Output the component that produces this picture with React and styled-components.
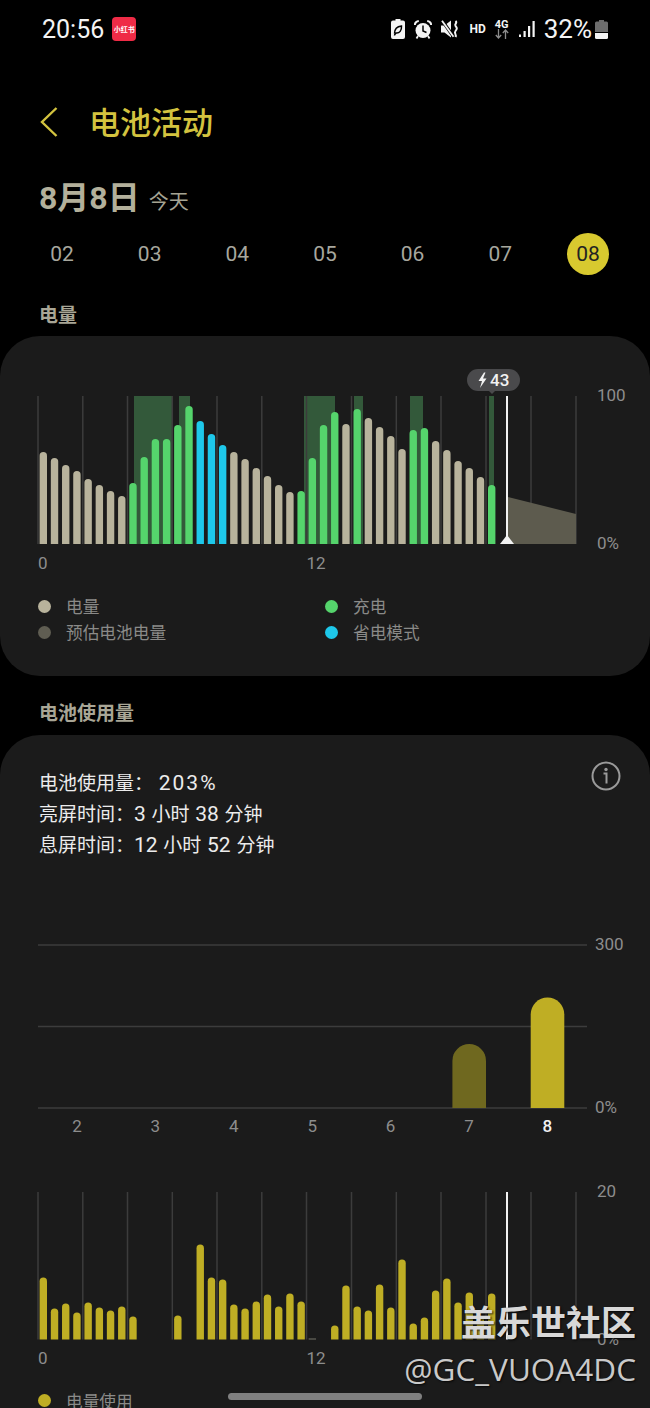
import React from "react";
import styled, { createGlobalStyle } from "styled-components";

const GlobalStyle = createGlobalStyle`
  html, body {
    margin: 0;
    padding: 0;
    background: #000;
  }
  * {
    box-sizing: border-box;
  }
`;

const sans = `Roboto, "Noto Sans CJK SC", sans-serif`;

const days = ["02", "03", "04", "05", "06", "07", "08"];
const weekDays = [2, 3, 4, 5, 6, 7, 8];

// t = tan, g = green, b = blue
const levelBars = [
  [92, "t"], [86, "t"], [79, "t"], [73, "t"], [65, "t"], [59, "t"], [53, "t"], [48, "t"],
  [61, "g"], [87, "g"], [105, "g"], [105, "g"], [119, "g"], [138, "g"],
  [123, "b"], [110, "b"], [99, "b"],
  [92, "t"], [85, "t"], [76, "t"], [68, "t"], [59, "t"], [52, "t"],
  [53, "g"], [86, "g"], [119, "g"], [132, "g"],
  [120, "t"], [135, "g"], [126, "t"], [117, "t"], [108, "t"], [95, "t"],
  [114, "g"], [116, "g"],
  [103, "t"], [94, "t"], [83, "t"], [76, "t"], [67, "t"], [59, "g"],
];

const usageBars = [
  62, 31, 36, 27, 37, 32, 29, 33, 23, 0, 0, 0, 24, 0, 95, 62, 60, 35, 31, 38, 45, 33, 46, 38, 1,
  0, 14, 54, 33, 29, 55, 32, 80, 16, 22, 49, 61, 37, 47, 22, 46,
];

const chargeBands = [
  [134, 173], [179, 190], [304, 335], [354, 363], [410, 423], [489, 494],
];

const barColors = { t: "#b8b39c", g: "#55d46c", b: "#1ec8ea", y: "#bfae24" };
const gridXs = [38, 82.8, 127.5, 172.3, 217, 261.8, 306.5, 351.5, 396.3, 441, 486, 531, 576];

const barX = (i) => 43.3 + i * 11.21;

const topRoundedBar = (cx, base, h, w) => {
  const r = w / 2;
  const l = cx - r;
  return `M${l} ${base} V${base - h + r} A${r} ${r} 0 0 1 ${l + w} ${base - h + r} V${base} Z`;
};

const Screen = styled.div`
  position: relative;
  width: 650px;
  height: 1408px;
  overflow: hidden;
  background: #000;
  font-family: ${sans};
`;

const StatusBar = styled.div`
  display: flex;
  align-items: center;
  height: 58px;
  padding: 0 42px;
  color: #f4f4f4;
`;

const Clock = styled.span`
  font-size: 25px;
`;

const AppBadge = styled.span`
  display: flex;
  align-items: center;
  justify-content: center;
  width: 24px;
  height: 24px;
  margin-left: 8px;
  border-radius: 4px;
  background: #ef2b46;
  color: #fff;
  font-size: 7px;
  font-weight: 700;
  white-space: nowrap;
`;

const StatusIcons = styled.div`
  display: flex;
  align-items: center;
  margin-left: auto;
`;

const IconSlot = styled.svg`
  display: block;
  margin-left: ${(p) => p.$gap || 0}px;
`;

const Net = styled.span`
  margin-left: ${(p) => p.$gap}px;
  font-size: ${(p) => p.$size}px;
  font-weight: ${(p) => p.$weight || 400};
`;

const NetStack = styled.div`
  display: flex;
  flex-direction: column;
  align-items: center;
  width: 14px;
  margin-left: 9px;
`;

const NetLabel = styled.span`
  font-size: 11px;
  font-weight: 700;
  line-height: 9px;
`;

const NetArrows = styled.svg`
  display: block;
`;

const TitleBar = styled.div`
  display: flex;
  align-items: center;
  gap: 31px;
  height: 64px;
  margin-top: 32px;
  padding-left: 40px;
`;

const Title = styled.h1`
  margin: 0 0 4px;
  color: #d3c33f;
  font-size: 31px;
  font-weight: 500;
`;

const DateTitle = styled.div`
  display: flex;
  align-items: baseline;
  height: 44px;
  margin-top: 22px;
  padding-left: 39px;
  line-height: 44px;
`;

const DateBig = styled.span`
  color: #b3b09b;
  font-size: 32px;
  font-weight: 700;
`;

const DateSub = styled.span`
  margin-left: 9px;
  color: #a5a393;
  font-size: 20px;
`;

const DayRow = styled.div`
  display: flex;
  justify-content: space-between;
  margin-top: 13px;
  padding: 0 41px;
`;

const Day = styled.div`
  display: flex;
  align-items: center;
  justify-content: center;
  width: 42px;
  height: 42px;
  border-radius: 50%;
  background: ${(p) => (p.$active ? "#d8c92f" : "transparent")};
  color: ${(p) => (p.$active ? "#222" : "#a7a79e")};
  font-size: 21px;
`;

const SectionLabel = styled.div`
  height: 26px;
  margin-top: ${(p) => p.$top}px;
  padding-left: 39px;
  color: #a9a696;
  font-size: 19px;
  font-weight: 700;
  line-height: 26px;
`;

const Card = styled.section`
  height: ${(p) => p.$height}px;
  margin-top: ${(p) => p.$top}px;
  padding-top: ${(p) => p.$pad}px;
  border-radius: ${(p) => (p.$open ? "40px 40px 0 0" : "40px")};
  background: #1b1b1b;
`;

const ChartSvg = styled.svg`
  display: block;
  margin-top: ${(p) => p.$top || 0}px;
`;

const AxisLabel = styled.text`
  fill: ${(p) => p.$fill || "#8d8d8d"};
  font-family: ${sans};
  font-size: 17px;
  font-weight: ${(p) => p.$weight || 400};
`;

const Legend = styled.div`
  display: grid;
  grid-template-columns: 287px 1fr;
  margin-top: ${(p) => p.$top}px;
  padding-left: 38px;
`;

const LegendItem = styled.div`
  display: flex;
  align-items: center;
  gap: 15px;
  height: 26px;
  color: #8a8a88;
  font-size: 16.7px;
`;

const Dot = styled.span`
  width: 13px;
  height: 13px;
  border-radius: 50%;
  background: ${(p) => p.$color};
`;

const SummaryRow = styled.div`
  display: flex;
  justify-content: space-between;
  align-items: flex-start;
  padding: 0 29px 0 39px;
`;

const SummaryText = styled.div`
  margin-top: 7px;
  color: #ececec;
  font-size: 19px;
  line-height: 31px;
  word-spacing: 1px;
`;

const Num = styled.span`
  font-size: 21px;
  letter-spacing: ${(p) => (p.$wide ? 2 : 0)}px;
`;

const HomeBar = styled.div`
  position: absolute;
  left: 228px;
  bottom: 8px;
  width: 194px;
  height: 7px;
  border-radius: 4px;
  background: #808080;
`;

const Watermark = styled.div`
  position: absolute;
  right: 14px;
  bottom: 19px;
  display: flex;
  flex-direction: column;
  align-items: flex-end;
  color: #d8d8d8;
  text-shadow: 1px 1px 2px rgba(0, 0, 0, 0.8);
  white-space: nowrap;
`;

const WatermarkBrand = styled.div`
  font-family: "Noto Sans CJK SC", sans-serif;
  font-size: 35px;
  font-weight: 700;
  line-height: 44px;
`;

const WatermarkUser = styled.div`
  margin-top: 6px;
  color: #c9c9c9;
  font-family: "Open Sans", sans-serif;
  font-size: 31.5px;
  line-height: 40px;
`;

const LeafBattery = () => (
  <IconSlot width="14" height="20" viewBox="0 0 14 20">
    <path d="M4.5 0h5v1.5H12a2 2 0 0 1 2 2V18a2 2 0 0 1-2 2H2a2 2 0 0 1-2-2V3.5a2 2 0 0 1 2-2h2.5z" fill="#f4f4f4" />
    <path d="M3.5 14.5c0-4.5 3-7 7-7.5 .3 4.5-2 7.5-5.5 7-1 1-1.5 1.5-1.5 2.5" fill="none" stroke="#000" strokeWidth="1.5" />
  </IconSlot>
);

const AlarmIcon = () => (
  <IconSlot $gap={9} width="18" height="19" viewBox="0 0 18 19">
    <circle cx="9" cy="10.5" r="7.5" fill="#f4f4f4" />
    <path d="M9 5.5v5.5l3.5 1.5" fill="none" stroke="#000" strokeWidth="1.5" />
    <path d="M.8 5C1 2.8 2.5 1.3 4.8 1M17.2 5C17 2.8 15.5 1.3 13.2 1" fill="none" stroke="#f4f4f4" strokeWidth="2" />
    <path d="M4 16 2.5 18.5M14 16 15.5 18.5" stroke="#f4f4f4" strokeWidth="1.8" />
  </IconSlot>
);

const MuteIcon = () => (
  <IconSlot $gap={9} width="18" height="18" viewBox="0 0 18 18">
    <path d="M0 5.5h3.5L10 .5v17l-6.5-5H0z" fill="#f4f4f4" />
    <path d="M1.5 1 12 16" stroke="#000" strokeWidth="3.2" />
    <path d="M1 .8l11.5 16" stroke="#f4f4f4" strokeWidth="1.8" />
    <path d="M14.5 1c2.5 2-1.500 3 0 5s2 2.5 0 5 1.5 3 0 6" fill="none" stroke="#f4f4f4" strokeWidth="2" />
  </IconSlot>
);

const SignalIcon = () => (
  <IconSlot $gap={10} width="16" height="16" viewBox="0 0 16 16">
    <rect x="0" y="13.5" width="2" height="2.5" fill="#f4f4f4" />
    <rect x="4.5" y="10" width="2.2" height="6" fill="#f4f4f4" />
    <rect x="9" y="5" width="2.2" height="11" fill="#f4f4f4" />
    <rect x="13.5" y="0" width="2.2" height="16" fill="#f4f4f4" />
  </IconSlot>
);

const BatteryIcon = () => (
  <IconSlot $gap={3} width="13" height="19" viewBox="0 0 13 19">
    <path d="M4 0h5v1.5h2.5A1.5 1.5 0 0 1 13 3v9H0V3a1.5 1.5 0 0 1 1.5-1.5H4z" fill="#6d6d6d" />
    <path d="M0 13h13v4.5a1.5 1.5 0 0 1-1.5 1.5h-10A1.5 1.5 0 0 1 0 17.5z" fill="#f4f4f4" />
  </IconSlot>
);

const BackIcon = () => (
  <svg width="18" height="30" viewBox="0 0 18 30">
    <path d="M16.5 1 2 15l14.5 14" fill="none" stroke="#d3c33f" strokeWidth="2.4" />
  </svg>
);

const GridLines = ({ top, base }) =>
  gridXs.map((x) => <line key={x} x1={x} x2={x} y1={top} y2={base} stroke="#3c3c3c" strokeWidth="1.5" />);

const NowLine = ({ top, base }) => <line x1="507" x2="507" y1={top} y2={base} stroke="#f2f2f2" strokeWidth="2" />;

const HourLabels = ({ y }) => (
  <>
    <AxisLabel x="38" y={y}>0</AxisLabel>
    <AxisLabel x="306.5" y={y}>12</AxisLabel>
  </>
);

// 电量图
const LevelChart = () => {
  const top = 31;
  const base = 179;
  return (
    <ChartSvg width="650" height="210" viewBox="0 0 650 210">
      {chargeBands.map(([a, b]) => (
        <rect key={a} x={a} y={top} width={b - a} height={base - top} fill="#33593a" />
      ))}
      <GridLines top={top} base={base} />
      <path d={`M508 132 L576 149 V${base} H508 Z`} fill="#5d5b4e" />
      {levelBars.map(([h, c], i) => (
        <path key={i} d={topRoundedBar(barX(i), base, h, 7.4)} fill={barColors[c]} />
      ))}
      <NowLine top={top} base={base} />
      <path d="M500 179 L507 170 L514 179 Z" fill="#f2f2f2" />
      <rect x="467" y="4" width="53" height="22" rx="11" fill="#4a4a4c" />
      <path d="M489 26 h6 l-3 3 Z" fill="#4a4a4c" />
      <path d="M484 7.5 L478.5 16 H482 L480 23 L486.5 13.5 H483 L485.5 7.5 Z" fill="#f2f2f2" />
      <AxisLabel x="490" y="21" $fill="#f2f2f2" $weight={500}>43</AxisLabel>
      <AxisLabel x="597" y="36">100</AxisLabel>
      <AxisLabel x="597" y="184">0%</AxisLabel>
      <HourLabels y={204} />
    </ChartSvg>
  );
};

// 每周使用量
const WeekChart = () => {
  const lines = [15, 96.5, 178];
  return (
    <ChartSvg $top={68.5} width="650" height="210" viewBox="0 0 650 210">
      {lines.map((y) => (
        <line key={y} x1="38" x2="587" y1={y} y2={y} stroke="#3c3c3c" strokeWidth="1.5" />
      ))}
      <path d={topRoundedBar(469.2, 178, 64, 33.6)} fill="#6f681f" />
      <path d={topRoundedBar(547.5, 178, 110.5, 33.6)} fill="#bfae24" />
      {weekDays.map((d, i) => (
        <AxisLabel
          key={d}
          x={77 + i * 78.4}
          y="202"
          textAnchor="middle"
          $fill={d === 8 ? "#f2f2f2" : "#8d8d8d"}
          $weight={d === 8 ? 500 : 400}
        >
          {d}
        </AxisLabel>
      ))}
      <AxisLabel x="595" y="20">300</AxisLabel>
      <AxisLabel x="595" y="183">0%</AxisLabel>
    </ChartSvg>
  );
};

// 电量使用图
const UsageChart = () => {
  const top = 12;
  const base = 159.5;
  return (
    <ChartSvg $top={40} width="650" height="190" viewBox="0 0 650 190">
      <GridLines top={top} base={base} />
      {usageBars.map((h, i) =>
        h > 1 ? (
          <path key={i} d={topRoundedBar(barX(i), base, h, 7.4)} fill={barColors.y} />
        ) : h === 1 ? (
          <rect key={i} x={barX(i) - 3.7} y={base - 1} width="7.4" height="1" fill="#77776a" />
        ) : null
      )}
      <NowLine top={top} base={base} />
      <AxisLabel x="597" y="17">20</AxisLabel>
      <AxisLabel x="597" y="165">0%</AxisLabel>
      <HourLabels y={184} />
    </ChartSvg>
  );
};

const App = () => {
  return (
    <Screen>
      <GlobalStyle />
      <StatusBar>
        <Clock>20:56</Clock>
        <AppBadge>小红书</AppBadge>
        <StatusIcons>
          <LeafBattery />
          <AlarmIcon />
          <MuteIcon />
          <Net $gap={10} $size={12} $weight={700}>HD</Net>
          <NetStack>
            <NetLabel>4G</NetLabel>
            <NetArrows width="14" height="10" viewBox="0 0 14 10">
              <path d="M3.5 0v9M.8 6l2.7 3 2.7-3M10.5 10V1M7.8 4l2.7-3 2.7 3" fill="none" stroke="#8c8c8c" strokeWidth="1.3" />
            </NetArrows>
          </NetStack>
          <SignalIcon />
          <Net $gap={9} $size={26}>32%</Net>
          <BatteryIcon />
        </StatusIcons>
      </StatusBar>

      <TitleBar>
        <BackIcon />
        <Title>电池活动</Title>
      </TitleBar>

      <DateTitle>
        <DateBig>8月8日</DateBig>
        <DateSub>今天</DateSub>
      </DateTitle>

      <DayRow>
        {days.map((d) => (
          <Day key={d} $active={d === "08"}>{d}</Day>
        ))}
      </DayRow>

      <SectionLabel $top={28}>电量</SectionLabel>
      <Card $top={7} $height={340} $pad={29}>
        <LevelChart />
        <Legend $top={18}>
          <LegendItem><Dot $color="#b8b39c" />电量</LegendItem>
          <LegendItem><Dot $color="#55d46c" />充电</LegendItem>
          <LegendItem><Dot $color="#5f5d52" />预估电池电量</LegendItem>
          <LegendItem><Dot $color="#1ec8ea" />省电模式</LegendItem>
        </Legend>
      </Card>

      <SectionLabel $top={25}>电池使用量</SectionLabel>
      <Card $top={8} $height={680} $pad={26} $open>
        <SummaryRow>
          <SummaryText>
            电池使用量： <Num $wide>203%</Num><br />
            亮屏时间：<Num>3</Num> 小时 <Num>38</Num> 分钟<br />
            息屏时间：<Num>12</Num> 小时 <Num>52</Num> 分钟
          </SummaryText>
          <svg width="30" height="30" viewBox="0 0 30 30">
            <circle cx="15" cy="15" r="13.5" fill="none" stroke="#9a9a9a" strokeWidth="2" />
            <circle cx="15" cy="8.5" r="1.7" fill="#9a9a9a" />
            <path d="M12.5 12.5H15.5V22.5" fill="none" stroke="#9a9a9a" strokeWidth="2" />
          </svg>
        </SummaryRow>
        <WeekChart />
        <UsageChart />
        <Legend $top={18}>
          <LegendItem><Dot $color="#bfae24" />电量使用</LegendItem>
        </Legend>
      </Card>

      <HomeBar />
      <Watermark>
        <WatermarkBrand>盖乐世社区</WatermarkBrand>
        <WatermarkUser>@GC_VUOA4DC</WatermarkUser>
      </Watermark>
    </Screen>
  );
};

export default App;
